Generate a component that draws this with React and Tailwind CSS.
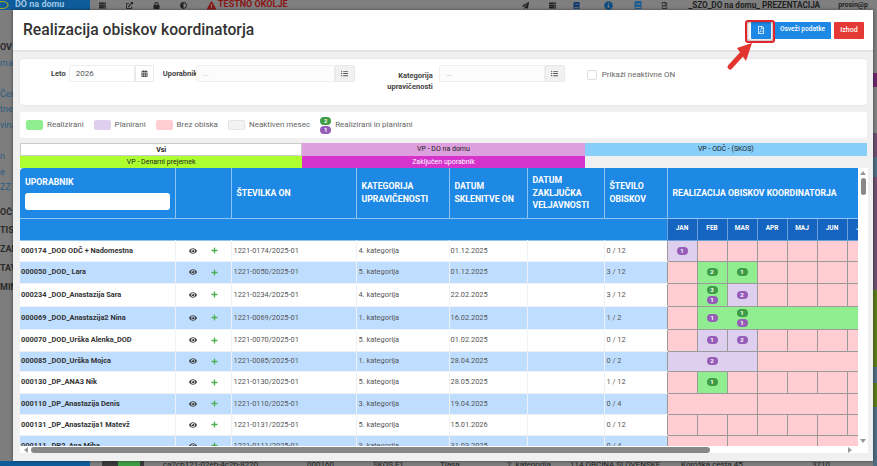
import React from "react";
import {
  FaBook,
  FaCalendarAlt,
  FaEye,
  FaExclamationTriangle,
  FaInfoCircle,
  FaListUl,
  FaPaperPlane,
  FaPlus,
  FaRegFileAlt,
  FaRegFilePdf,
  FaServer,
  FaAdjust,
  FaLock,
  FaExternalLinkAlt,
} from "react-icons/fa";

const months = ["JAN", "FEB", "MAR", "APR", "MAJ", "JUN", "JUL", "AVG", "SEP", "OKT", "NOV", "DEC"];

const P = (span = 1, b = []) => ({ t: "p", span, b });
const G = (span = 1, b = []) => ({ t: "g", span, b });
const E = (span = 1) => ({ t: "e", span, b: [] });
const pinks = (n) => Array.from({ length: n }, () => E());

const rows = [
  { h: 21, name: "000174 _DOD ODČ + Nadomestna", on: "1221-0174/2025-01", kat: "4. kategorija", dat: "01.12.2025", ob: "0 / 12", m: [P(1, ["p1"]), ...pinks(11)] },
  { h: 22, name: "000050 _DOD_ Lara", on: "1221-0050/2025-01", kat: "5. kategorija", dat: "01.12.2025", ob: "3 / 12", m: [E(), G(1, ["g2"]), G(1, ["g1"]), ...pinks(9)] },
  { h: 23, name: "000234 _DOD_Anastazija Sara", on: "1221-0234/2025-01", kat: "4. kategorija", dat: "22.02.2025", ob: "3 / 12", m: [E(), G(1, ["g3", "p1"]), P(1, ["p2"]), ...pinks(9)] },
  { h: 23, name: "000069 _DOD_Anastazija2 Nina", on: "1221-0069/2025-01", kat: "1. kategorija", dat: "16.02.2025", ob: "1 / 2", m: [E(), { t: "g", span: 1, b: ["p1"], open: "r" }, { t: "g", span: 10, b: ["g1", "p1"], open: "l", left: true }] },
  { h: 22, name: "000070 _DOD_Urška Alenka_DOD", on: "1221-0070/2025-01", kat: "5. kategorija", dat: "01.02.2025", ob: "0 / 12", m: [E(), P(1, ["p1"]), P(1, ["p2"]), ...pinks(9)] },
  { h: 20, name: "000085 _DOD_Urška Mojca", on: "1221-0085/2025-01", kat: "1. kategorija", dat: "28.04.2025", ob: "0 / 2", m: [P(3, ["p2"]), E(9)] },
  { h: 22, name: "000130 _DP_ANA3 Nik", on: "1221-0130/2025-01", kat: "5. kategorija", dat: "28.05.2025", ob: "1 / 12", m: [E(), G(1, ["g1"]), ...pinks(10)] },
  { h: 21, name: "000110 _DP_Anastazija Denis", on: "1221-0110/2025-01", kat: "3. kategorija", dat: "19.04.2025", ob: "0 / 4", m: [E(3), E(3), E(6)] },
  { h: 21, name: "000131 _DP_Anastazija1 Matevž", on: "1221-0131/2025-01", kat: "5. kategorija", dat: "15.01.2026", ob: "0 / 12", m: pinks(12) },
  { h: 21, name: "000111 _DP2_Ana Miha", on: "1221-0111/2025-01", kat: "3. kategorija", dat: "31.03.2025", ob: "0 / 4", m: [E(2), E(3), E(7)] },
];

const cellBg = { p: "bg-[#dfcfee]", g: "bg-[#90ee90]", e: "bg-[#ffcdd2]" };

const Badge = ({ code }) => (
  <span
    className={`mx-auto flex h-[8px] w-[11px] items-center justify-center rounded-full text-[6px] font-bold leading-none text-white ${
      code[0] === "g" ? "bg-[#3f9c46]" : "bg-[#955cb8]"
    }`}
  >
    {code[1]}
  </span>
);

const MonthCell = ({ c }) => (
  <td
    colSpan={c.span}
    className={`border border-[#9a9a9a] p-0 ${cellBg[c.t]} ${c.open === "r" ? "border-r-0" : ""} ${c.open === "l" ? "border-l-0" : ""}`}
  >
    <div className={`flex flex-col justify-center gap-[2px] ${c.left ? "w-[30px]" : ""}`}>
      {c.b.map((b, i) => (
        <Badge key={i} code={b} />
      ))}
    </div>
  </td>
);

const Legend = ({ color, border, label }) => (
  <div className="flex items-center gap-[4px]">
    <span className={`h-[10px] w-[17px] rounded-[2px] border ${color} ${border}`} />
    <span>{label}</span>
  </div>
);

const Addon = ({ children }) => (
  <span className="flex h-[17px] w-[20px] items-center justify-center rounded-r-[2px] border border-[#e8e8e8] bg-[#f1f1f1] text-[7px] text-[#555]">
    {children}
  </span>
);

const thClass = "border-r border-b border-[#8fc4f2] px-[5px] text-left align-middle font-bold leading-[12.5px]";

export default function App() {
  return (
    <div className="relative h-[466px] w-[877px] overflow-hidden bg-[#7d7d7d] font-['Roboto',sans-serif]">
      {/* dimmed page behind the modal */}
      <div className="flex h-[10px] bg-[#7f7f7f]">
        <div className="flex w-[90px] shrink-0 items-center overflow-hidden bg-[#0e5c99] text-[9px] font-bold text-[#9cc5e4]">
          <svg className="mr-[5px] shrink-0" width="10" height="10" viewBox="0 0 10 10">
            <ellipse cx="2" cy="5" rx="6" ry="3.5" fill="none" stroke="#a3a82a" strokeWidth="1.2" />
          </svg>
          DO na domu
        </div>
        <div className="flex flex-1 items-center whitespace-nowrap text-[8px] text-[#222]">
          <FaServer className="ml-[9px] shrink-0 text-[7px]" />
          <FaExternalLinkAlt className="ml-[20px] shrink-0 text-[7px]" />
          <FaLock className="ml-[20px] shrink-0 text-[7px]" />
          <FaAdjust className="ml-[20px] shrink-0 text-[7px]" />
          <FaExclamationTriangle className="ml-[20px] shrink-0 text-[9px] text-[#8a1414]" />
          <span className="ml-[2px] text-[9px] font-bold text-[#8a1414]">TESTNO OKOLJE</span>
          <FaPaperPlane className="ml-[234px] shrink-0 text-[7px]" />
          <FaServer className="ml-[20px] shrink-0 text-[7px]" />
          <FaBook className="ml-[17px] shrink-0 text-[7px] text-[#0f3a6e]" />
          <FaInfoCircle className="ml-[24px] shrink-0 text-[9px] text-[#0f4e85]" />
          <FaBook className="ml-[21px] shrink-0 text-[8px] text-[#1c5d96]" />
          <FaRegFileAlt className="ml-[19px] shrink-0 text-[7px]" />
          <span className="ml-[21px] text-[8.2px] font-bold">_SZO_DO na domu_ PREZENTACIJA</span>
          <span className="ml-[18px] text-[7px] font-bold">prosin@p</span>
        </div>
      </div>
      <div className="flex h-[451px] w-[13px] flex-col overflow-hidden pt-[30px] text-[9px] leading-[15px] text-[#2e5c80]">
        <span className="font-bold text-[#2a2a2a]">OV</span>
        <span className="mt-[1px]">ma</span>
        <span className="mt-[16px]">Čeni</span>
        <span>tne</span>
        <span className="mt-[1px]">vina</span>
        <span className="mt-[16px]">n</span>
        <span className="mt-[1px]">e ZZ</span>
        <span className="mt-[10px] font-bold text-[#2a2a2a]">OČ</span>
        <span className="mt-[3px] font-bold text-[#2a2a2a]">TIS</span>
        <span className="mt-[4px] font-bold text-[#2a2a2a]">ZAN</span>
        <span className="mt-[4px] font-bold text-[#2a2a2a]">TAV</span>
        <span className="mt-[4px] font-bold text-[#2a2a2a]">MIN</span>
      </div>
      <div className="flex h-[5px] items-start overflow-hidden text-[8px] leading-[8px] whitespace-nowrap text-[#222]">
        <div className="h-full w-[90px] shrink-0 bg-[#0e5c99]" />
        <div className="ml-[12px] flex h-full w-[61px] shrink-0 items-start">
          <span className="h-full w-[42px] bg-[#3a3a3a]">
            <span className="ml-[16px] block h-full w-[22px] bg-[#3f9c46]" />
          </span>
        </div>
        <span className="w-[144px] shrink-0">ca2cb121-02eb-4c2b-8220</span>
        <span className="w-[66px] shrink-0">000160</span>
        <span className="w-[67px] shrink-0">SKOS F1</span>
        <span className="w-[67px] shrink-0">Tiasa</span>
        <span className="w-[63px] shrink-0">2. kategorija</span>
        <span className="w-[111px] shrink-0">114 OBČINA SLOVENSKE</span>
        <span className="w-[131px] shrink-0">Koroška cesta 45</span>
        <span className="shrink-0">3210</span>
      </div>

      {/* colored rows of the page peeking out to the right of the modal */}
      <div className="absolute right-0 top-[10px] flex h-[456px] w-[4px] flex-col">
        <div className="h-[63px] bg-[#7f7f7f]" />
        <div className="h-[14px] bg-[#6a2a6a]" />
        <div className="h-[46px] bg-[#808080]" />
        <div className="h-[24px] bg-[#6b4f6b]" />
        <div className="h-[20px] bg-[#4f6d80]" />
        <div className="h-[113px] bg-[#6b4f6b]" />
        <div className="h-[77px] bg-[#5a7a1a]" />
        <div className="h-[16px] bg-[#4f6d80]" />
        <div className="h-[24px] bg-[#5a7a1a]" />
        <div className="flex-1 bg-[#4f6d80]" />
      </div>

      {/* modal */}
      <div className="absolute left-[13px] top-[10px] flex h-[451px] w-[860px] flex-col bg-[#f0f0f0] shadow-[0_0_3px_rgba(0,0,0,0.5)]">
        <div className="flex h-[42px] shrink-0 items-center justify-between border-b-2 border-[#e2e2e2] bg-white pl-[10px] pr-[9px]">
          <h1 className="text-[15.7px] font-medium leading-none text-[#333]">Realizacija obiskov koordinatorja</h1>
          <div className="flex items-center gap-[3px] text-[7px] font-medium text-white">
            <button className="flex h-[17px] w-[20px] items-center justify-center rounded-[1px] bg-[#1e88e5] text-[8px]">
              <FaRegFilePdf />
            </button>
            <button className="h-[17px] w-[57px] rounded-[1px] bg-[#1e88e5] text-[6.6px]">Osveži podatke</button>
            <button className="h-[17px] w-[30px] rounded-[1px] bg-[#e53935]">Izhod</button>
          </div>
        </div>

        <div className="flex min-h-0 flex-1 flex-col pl-[7px] pr-[6px] pt-[7px]">
          {/* filters */}
          <div className="flex h-[46px] shrink-0 rounded-[4px] bg-white pt-[6px] text-[7.5px] text-[#555] shadow-[0_0_2px_rgba(0,0,0,0.1)]">
            <span className="ml-[31px] mr-[3px] mt-[3px] font-bold text-[#444]">Leto</span>
            <div className="flex h-[17px] w-[85px] items-center">
              <span className="flex h-full flex-1 items-center rounded-l-[2px] border border-[#eee] pl-[6px] text-[8px]">2026</span>
              <span className="flex h-[17px] w-[19px] items-center justify-center border border-[#e8e8e8] text-[7px] text-[#555]">
                <FaCalendarAlt />
              </span>
            </div>
            <span className="ml-[9px] mt-[3px] w-[33px] overflow-hidden font-bold whitespace-nowrap text-[#444]">Uporabnik</span>
            <div className="flex h-[17px] w-[159px]">
              <span className="flex h-full flex-1 items-center rounded-l-[2px] border border-[#eee] bg-[#fcfcfc] pl-[6px] text-[#aaa]">...</span>
              <Addon><FaListUl /></Addon>
            </div>
            <span className="ml-[20px] mt-[5px] w-[58px] text-right font-bold leading-[11px] text-[#444]">Kategorija upravičenosti</span>
            <div className="ml-[6px] flex h-[17px] w-[126px]">
              <span className="flex h-full flex-1 items-center rounded-l-[2px] border border-[#eee] bg-[#fcfcfc] pl-[6px] text-[#aaa]">...</span>
              <Addon><FaListUl /></Addon>
            </div>
            <span className="ml-[22px] mt-[5px] h-[10px] w-[10px] rounded-[2px] border border-[#ddd] bg-white" />
            <span className="ml-[5px] mt-[4px] text-[8px] text-[#666]">Prikaži neaktivne ON</span>
          </div>

          {/* legend */}
          <div className="mt-[7px] flex h-[26px] shrink-0 items-center gap-[10px] rounded-[3px] bg-white pl-[6px] text-[8px] text-[#666]">
            <Legend color="bg-[#90ee90]" border="border-[#90ee90]" label="Realizirani" />
            <Legend color="bg-[#dfcfee]" border="border-[#dfcfee]" label="Planirani" />
            <Legend color="bg-[#ffcdd2]" border="border-[#ffcdd2]" label="Brez obiska" />
            <Legend color="bg-[#f3f3f3]" border="border-[#e4e4e4]" label="Neaktiven mesec" />
            <div className="flex items-center gap-[4px]">
              <div className="flex flex-col gap-[1px]">
                <Badge code="g2" />
                <Badge code="p1" />
              </div>
              <span>Realizirani in planirani</span>
            </div>
          </div>

          {/* status tabs */}
          <div className="mt-[5px] grid h-[25px] shrink-0 grid-cols-3 grid-rows-2 text-center text-[7px] leading-[12px] text-[#222]">
            <div className="border border-[#ccc] bg-white font-bold">Vsi</div>
            <div className="bg-[#dd9fdd]">VP - DO na domu</div>
            <div className="bg-[#87cefa]">VP - ODČ - (SKOS)</div>
            <div className="bg-[#adff2f]">VP - Denarni prejemek</div>
            <div className="bg-[#d633cc] text-white">Zaključen uporabnik</div>
          </div>

          {/* table + vertical scrollbar */}
          <div className="flex h-[278px] w-[848px] shrink-0 bg-white">
            <div className="h-full w-[838px] overflow-hidden rounded-tl-[4px]">
              <table className="w-[1007px] table-fixed border-collapse text-[7.4px] text-[#555]">
                <colgroup>
                  <col className="w-[155px]" />
                  <col className="w-[56px]" />
                  <col className="w-[125px]" />
                  <col className="w-[93px]" />
                  <col className="w-[78px]" />
                  <col className="w-[77px]" />
                  <col className="w-[63px]" />
                  {months.map((m) => (
                    <col key={m} className="w-[30px]" />
                  ))}
                </colgroup>
                <thead className="bg-[#1e88e5] text-[8.7px] text-white">
                  <tr className="h-[50px]">
                    <th className={thClass}>
                      <div className="mb-[4px]">UPORABNIK</div>
                      <div className="h-[17px] rounded-[3px] bg-white" />
                    </th>
                    <th className={thClass} />
                    <th className={thClass}>ŠTEVILKA ON</th>
                    <th className={thClass}>KATEGORIJA UPRAVIČENOSTI</th>
                    <th className={thClass}>DATUM SKLENITVE ON</th>
                    <th className={thClass}>DATUM ZAKLJUČKA VELJAVNOSTI</th>
                    <th className={thClass}>ŠTEVILO OBISKOV</th>
                    <th colSpan={12} className={`${thClass} whitespace-nowrap`}>REALIZACIJA OBISKOV KOORDINATORJA</th>
                  </tr>
                  <tr className="h-[22px] border-b border-[#8fc4f2]">
                    <th colSpan={7} className="p-0" />
                    {months.map((m) => (
                      <th key={m} className="border border-[#6c9fd6] bg-[#1565c0] p-0 text-center text-[6.5px] font-bold">
                        {m}
                      </th>
                    ))}
                  </tr>
                </thead>
                <tbody>
                  {rows.map((r, i) => (
                    <tr key={r.on} style={{ height: r.h }} className={i % 2 ? "bg-[#bfdeff]" : "bg-white"}>
                      <td className="truncate border-r border-b border-[#eef2f6] pl-[1px] font-bold text-[#333]">{r.name}</td>
                      <td className="border-r border-b border-[#eef2f6] p-0">
                        <div className="flex items-center justify-center gap-[14px]">
                          <FaEye className="text-[8px] text-[#444]" />
                          <FaPlus className="text-[7px] text-[#4caf50]" />
                        </div>
                      </td>
                      <td className="border-r border-b border-[#eef2f6] pl-[2px]">{r.on}</td>
                      <td className="border-r border-b border-[#eef2f6] pl-[2px]">{r.kat}</td>
                      <td className="border-r border-b border-[#eef2f6] pl-[1px]">{r.dat}</td>
                      <td className="border-r border-b border-[#eef2f6]" />
                      <td className="border-b border-[#eef2f6] pl-[2px]">{r.ob}</td>
                      {r.m.map((c, j) => (
                        <MonthCell key={j} c={c} />
                      ))}
                    </tr>
                  ))}
                </tbody>
              </table>
            </div>
            <div className="flex w-[10px] flex-col items-center justify-between py-[3px]">
              <div className="flex flex-col items-center gap-[3px]">
                <span className="h-0 w-0 border-x-[3px] border-b-[4px] border-x-transparent border-b-[#999]" />
                <span className="h-[17px] w-[5px] rounded-full bg-[#888]" />
              </div>
              <span className="h-0 w-0 border-x-[3px] border-t-[4px] border-x-transparent border-t-[#999]" />
            </div>
          </div>

          {/* horizontal scrollbar */}
          <div className="flex h-[7px] w-[848px] shrink-0 items-center bg-white pl-[4px]">
            <span className="h-0 w-0 border-y-[3px] border-r-[4px] border-y-transparent border-r-[#999]" />
            <span className="ml-[3px] h-[6px] w-[679px] rounded-full bg-[#888]" />
            <span className="ml-[138px] h-0 w-0 border-y-[3px] border-l-[4px] border-y-transparent border-l-[#999]" />
          </div>
        </div>
      </div>

      {/* highlight drawn over the screenshot */}
      <div className="absolute left-[745px] top-[20px] h-[23px] w-[30px] rounded-[3px] border-2 border-[#e2252b] shadow-[inset_0_0_3px_rgba(0,0,0,0.55)]" />
      <svg className="absolute left-[724px] top-[42px]" width="30" height="30" viewBox="0 0 30 30">
        <path d="M6 25 L17 13" stroke="#e2352f" strokeWidth="5" strokeLinecap="round" />
        <path d="M28 1 L22 19 L13 6 Z" fill="#e2352f" />
      </svg>
    </div>
  );
}
